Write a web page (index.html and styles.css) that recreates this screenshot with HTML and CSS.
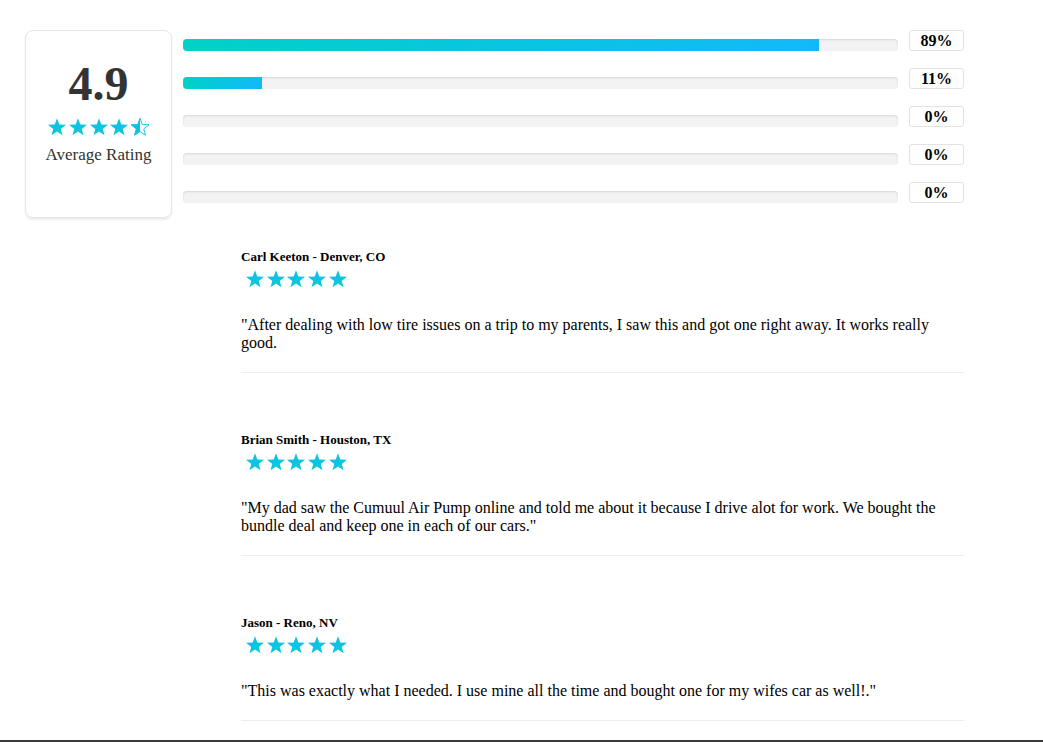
FILE: index.html
```html
<!DOCTYPE html>
<html lang="en">
<head>
  <meta charset="UTF-8" />
  <meta name="viewport" content="width=device-width, initial-scale=1.0" />
  <title>Customer Reviews</title>
  <link rel="stylesheet" href="styles.css">
</head>
<body>

  <svg class="defs" width="0" height="0" aria-hidden="true">
    <defs>
      <linearGradient id="starFill" x1="0" y1="0" x2="1" y2="1">
        <stop offset="0" stop-color="#16b9f4" />
        <stop offset="1" stop-color="#00d0cc" />
      </linearGradient>
      <path id="star" d="M12 .3L15.06 8.69 23.98 9.01 16.95 14.51 19.41 23.09 12 18.1 4.59 23.09 7.05 14.51 .02 9.01 8.94 8.69Z" />
      <clipPath id="halfClip">
        <rect x="0" y="0" width="12" height="24" />
      </clipPath>
    </defs>
  </svg>

  <div class="page">

    <section class="summary">
      <div class="score-card">
        <div class="score">4.9</div>
        <div class="stars">
          <svg class="star" viewBox="0 0 24 24"><use href="#star" fill="url(#starFill)" /></svg>
          <svg class="star" viewBox="0 0 24 24"><use href="#star" fill="url(#starFill)" /></svg>
          <svg class="star" viewBox="0 0 24 24"><use href="#star" fill="url(#starFill)" /></svg>
          <svg class="star" viewBox="0 0 24 24"><use href="#star" fill="url(#starFill)" /></svg>
          <svg class="star" viewBox="0 0 24 24">
            <use href="#star" fill="none" stroke="#12c3e6" stroke-width="1.3" />
            <use href="#star" fill="url(#starFill)" clip-path="url(#halfClip)" />
          </svg>
        </div>
        <div class="score-label">Average Rating</div>
      </div>

      <div class="bars">
        <div class="bar-row">
          <div class="track"><div class="fill" style="width: 89%"></div></div>
          <div class="percent">89%</div>
        </div>
        <div class="bar-row">
          <div class="track"><div class="fill" style="width: 11%"></div></div>
          <div class="percent">11%</div>
        </div>
        <div class="bar-row">
          <div class="track"><div class="fill" style="width: 0%"></div></div>
          <div class="percent">0%</div>
        </div>
        <div class="bar-row">
          <div class="track"><div class="fill" style="width: 0%"></div></div>
          <div class="percent">0%</div>
        </div>
        <div class="bar-row">
          <div class="track"><div class="fill" style="width: 0%"></div></div>
          <div class="percent">0%</div>
        </div>
      </div>
    </section>

    <section class="reviews">
      <div class="review">
        <h4 class="review-name">Carl Keeton - Denver, CO</h4>
        <div class="stars review-stars">
          <svg class="star" viewBox="0 0 24 24"><use href="#star" fill="url(#starFill)" /></svg>
          <svg class="star" viewBox="0 0 24 24"><use href="#star" fill="url(#starFill)" /></svg>
          <svg class="star" viewBox="0 0 24 24"><use href="#star" fill="url(#starFill)" /></svg>
          <svg class="star" viewBox="0 0 24 24"><use href="#star" fill="url(#starFill)" /></svg>
          <svg class="star" viewBox="0 0 24 24"><use href="#star" fill="url(#starFill)" /></svg>
        </div>
        <p class="review-text">"After dealing with low tire issues on a trip to my parents, I saw this and got one right away. It works really good.</p>
      </div>

      <div class="review">
        <h4 class="review-name">Brian Smith - Houston, TX</h4>
        <div class="stars review-stars">
          <svg class="star" viewBox="0 0 24 24"><use href="#star" fill="url(#starFill)" /></svg>
          <svg class="star" viewBox="0 0 24 24"><use href="#star" fill="url(#starFill)" /></svg>
          <svg class="star" viewBox="0 0 24 24"><use href="#star" fill="url(#starFill)" /></svg>
          <svg class="star" viewBox="0 0 24 24"><use href="#star" fill="url(#starFill)" /></svg>
          <svg class="star" viewBox="0 0 24 24"><use href="#star" fill="url(#starFill)" /></svg>
        </div>
        <p class="review-text">"My dad saw the Cumuul Air Pump online and told me about it because I drive alot for work. We bought the bundle deal and keep one in each of our cars."</p>
      </div>

      <div class="review">
        <h4 class="review-name">Jason - Reno, NV</h4>
        <div class="stars review-stars">
          <svg class="star" viewBox="0 0 24 24"><use href="#star" fill="url(#starFill)" /></svg>
          <svg class="star" viewBox="0 0 24 24"><use href="#star" fill="url(#starFill)" /></svg>
          <svg class="star" viewBox="0 0 24 24"><use href="#star" fill="url(#starFill)" /></svg>
          <svg class="star" viewBox="0 0 24 24"><use href="#star" fill="url(#starFill)" /></svg>
          <svg class="star" viewBox="0 0 24 24"><use href="#star" fill="url(#starFill)" /></svg>
        </div>
        <p class="review-text">"This was exactly what I needed. I use mine all the time and bought one for my wifes car as well!."</p>
      </div>
    </section>

  </div>

</body>
</html>
```

FILE: styles.css
```css
html, body {
  height: 100%;
}

body {
  font-family: 'Liberation Serif', 'Times New Roman', serif;
  margin: 0;
  padding: 0;
  background-color: #fff;
  color: #000;
}

.defs {
  position: absolute;
  width: 0;
  height: 0;
}

.page {
  box-sizing: border-box;
  min-height: 100%;
  padding: 30px 79px 0 25px;
  border-bottom: 2px solid #3b3b3b;
}

.summary {
  display: flex;
  gap: 11px;
}

.score-card {
  box-sizing: border-box;
  width: 147px;
  height: 188px;
  padding-top: 29px;
  border: 1px solid #e6e6e6;
  border-radius: 8px;
  box-shadow: 0 2px 2px rgba(0, 0, 0, 0.08);
  text-align: center;
}

.score {
  font-size: 48px;
  font-weight: bold;
  line-height: 1;
  color: #333;
}

.stars {
  display: flex;
  gap: 2.7px;
}

.score-card .stars {
  justify-content: center;
  margin-top: 10px;
}

.star {
  width: 18px;
  height: 18px;
  display: block;
}

.score-label {
  margin-top: 9px;
  font-size: 17px;
  line-height: 20px;
  color: #333;
}

.bars {
  flex: 1;
  display: flex;
  flex-direction: column;
  gap: 17px;
}

.bar-row {
  display: flex;
  align-items: flex-end;
  gap: 11px;
}

.track {
  flex: 1;
  height: 12px;
  background-color: #f3f3f3;
  border-radius: 4px;
  box-shadow: inset 0 1px 2px rgba(0, 0, 0, 0.12);
  overflow: hidden;
}

.fill {
  height: 100%;
  background: linear-gradient(to right, #00d2c6, #12b9fa);
}

.percent {
  box-sizing: border-box;
  width: 55px;
  height: 21px;
  border: 1px solid #e2e2e2;
  border-radius: 3px;
  font-size: 16px;
  font-weight: bold;
  line-height: 19px;
  text-align: center;
}

.reviews {
  margin: 32px 0 0 216px;
}

.review {
  padding-bottom: 20px;
  border-bottom: 1px solid #eee;
  margin-bottom: 60px;
}

.review:last-child {
  margin-bottom: 0;
}

.review-name {
  margin: 0;
  font-size: 13px;
  line-height: 14px;
}

.review-stars {
  margin: 6px 0 0 5px;
}

.review-text {
  margin: 28px 0 0;
  font-size: 16px;
  line-height: 18px;
}
```
